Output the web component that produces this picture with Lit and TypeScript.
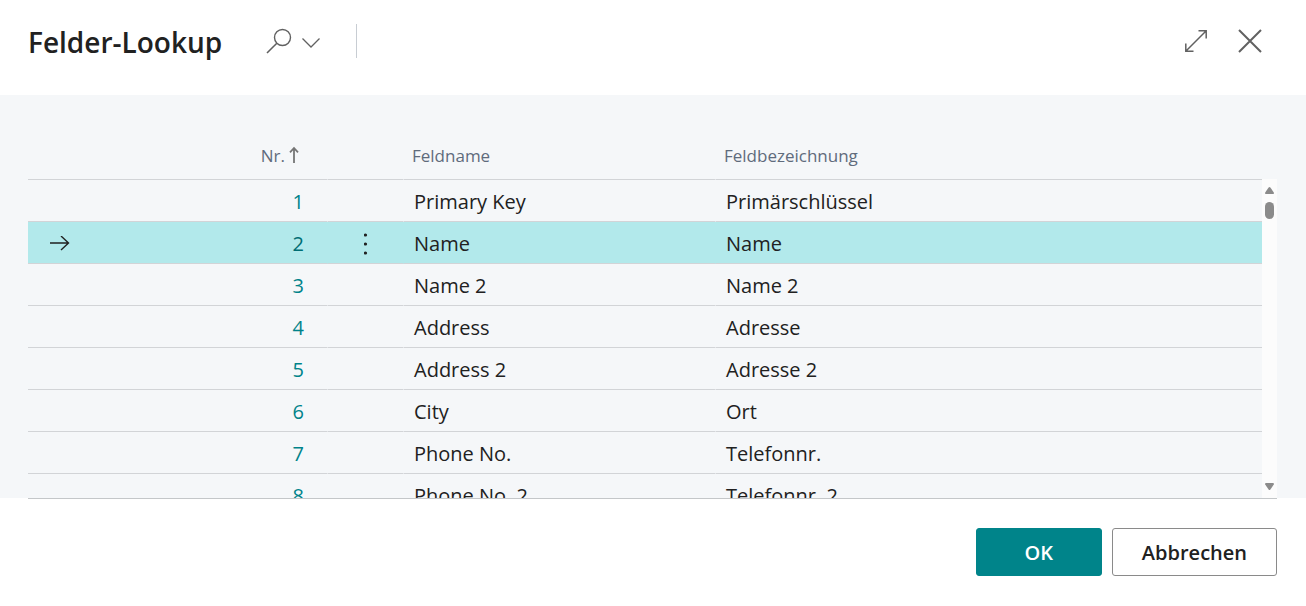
import { LitElement, html, css, svg } from "lit";
import { customElement, state } from "lit/decorators.js";
import { classMap } from "lit/directives/class-map.js";

interface Field {
  no: number;
  name: string;
  caption: string;
}

const FIELDS: Field[] = [
  { no: 1, name: "Primary Key", caption: "Primärschlüssel" },
  { no: 2, name: "Name", caption: "Name" },
  { no: 3, name: "Name 2", caption: "Name 2" },
  { no: 4, name: "Address", caption: "Adresse" },
  { no: 5, name: "Address 2", caption: "Adresse 2" },
  { no: 6, name: "City", caption: "Ort" },
  { no: 7, name: "Phone No.", caption: "Telefonnr." },
  { no: 8, name: "Phone No. 2", caption: "Telefonnr. 2" },
];

const line = (w: number, h: number, d: unknown) => html`
  <svg class="icon" width=${w} height=${h} viewBox="0 0 ${w} ${h}" aria-hidden="true">${d}</svg>
`;

const searchIcon = line(26, 26, svg`
  <circle cx="16.5" cy="9.5" r="8" stroke-width="1.4" />
  <path d="M10.8 15.2 1 25" stroke-width="1.6" />`);
const chevronIcon = line(20, 16, svg`<path d="M1.5 5.500 10 14 18.5 5.500" stroke-width="1.3" />`);
const expandIcon = line(24, 24, svg`
  <path d="M2 22 22 2M14.5 1.8h7.7v7.7M1.8 14.5v7.7h7.7" stroke-width="1.5" />`);
const closeIcon = line(26, 26, svg`<path d="M2 2 24 24M24 2 2 24" stroke-width="2" />`);
const sortIcon = line(10, 20, svg`<path d="M5 17V2M1 6.4 5 2l4 4.4" stroke-width="1.8" />`);
const currentIcon = line(20, 16, svg`<path d="M0 7H18.500M11 0 18.500 7l-7.500 7" stroke-width="1.4" />`);
const moreIcon = html`
  <svg class="dots" width="4" height="24" viewBox="0 0 4 24" aria-hidden="true">
    <circle cx="1.500" cy="2" r="1.600" /><circle cx="1.500" cy="11" r="1.600" /><circle cx="1.500" cy="20" r="1.600" />
  </svg>`;

@customElement("app-root")
export class AppRoot extends LitElement {
  @state() private selected = 2;

  static styles = css`
    :host {
      display: flex;
      flex-direction: column;
      height: 100vh;
      background: #fff;
      color: #212121;
      font: 20px/28px "Segoe UI", "Open Sans", "Noto Sans", sans-serif;
    }
    * {
      box-sizing: border-box;
    }
    button {
      font: inherit;
      color: inherit;
      background: none;
      border: 0;
      padding: 0;
      cursor: pointer;
    }
    .icon {
      display: block;
      fill: none;
      stroke: currentColor;
    }
    .header {
      display: flex;
      align-items: center;
      padding: 24px 43px 37px 28px;
      color: #616161;
    }
    .title {
      margin: 0 44px 0 0;
      padding-top: 2px;
      font-size: 28px;
      line-height: 32px;
      font-weight: 600;
      color: #212121;
    }
    .search {
      display: flex;
      align-items: center;
      gap: 9px;
      padding-right: 35px;
      border-right: 1px solid #c8cdd3;
      height: 34px;
    }
    .window {
      display: flex;
      align-items: center;
      gap: 29px;
      margin-left: auto;
    }
    .body {
      flex: 1;
      min-height: 0;
      display: flex;
      background: linear-gradient(#f5f7f9, #f5f7f9) 0 0 / 100% calc(100% - 1px) no-repeat;
      padding: 36px 29px 0 28px;
    }
    .list {
      flex: 1;
      display: flex;
      border-bottom: 1px solid #c4c7c9;
    }
    .viewport {
      flex: 1;
      overflow: hidden;
    }
    .fields {
      width: 100%;
      table-layout: fixed;
      border-collapse: separate;
      border-spacing: 0;
    }
    .c-mark {
      width: 64px;
    }
    .c-no {
      width: 235px;
    }
    .c-menu {
      width: 76px;
    }
    .c-name {
      width: 312px;
    }
    th,
    td {
      padding: 2px 0 0 10px;
      text-align: left;
      border-bottom: 1px solid #d2d4d7;
      border-left: 1px solid transparent;
    }
    th {
      position: sticky;
      top: 0;
      height: 49px;
      padding-left: 8px;
      font-size: 17px;
      font-weight: 400;
      color: #5f6b7c;
      background: #f5f7f9;
    }
    td {
      height: 42px;
    }
    .mark,
    .no {
      border-left: 0;
    }
    .mark {
      padding-left: 22px;
    }
    .no {
      padding: 2px 23px 0 0;
      text-align: right;
      color: #00838a;
    }
    th.no {
      padding-right: 28px;
      color: #5f6b7c;
    }
    .sort {
      display: inline-flex;
      align-items: center;
      gap: 4px;
    }
    .sort .icon {
      color: #757575;
    }
    .menu {
      padding: 2px 0 0;
      text-align: center;
    }
    .menu button {
      display: inline-flex;
      justify-content: center;
      width: 32px;
      vertical-align: middle;
    }
    .dots {
      fill: #212121;
    }
    .selected td {
      background: #b2e9eb;
    }
    .selected .no {
      color: #006d73;
    }
    .scroll {
      width: 15px;
      margin-top: 48px;
      padding: 8px 3px;
      display: flex;
      flex-direction: column;
      align-items: center;
      gap: 8px;
      background: #fcfcfc;
    }
    .scroll svg {
      fill: #8b8b8b;
    }
    .thumb {
      width: 9px;
      height: 17px;
      border-radius: 5px;
      background: #8b8b8b;
    }
    .down {
      margin-top: auto;
    }
    .footer {
      display: flex;
      justify-content: flex-end;
      gap: 10px;
      padding: 29px 29px 30px;
    }
    .footer button {
      height: 48px;
      padding: 2px 29px 0;
      min-width: 126px;
      border: 1px solid #8a8a8a;
      border-radius: 3px;
      font-weight: 600;
      color: #212121;
    }
    .footer .primary {
      background: #00848a;
      border-color: #00848a;
      color: #fff;
    }
  `;

  render() {
    return html`
      <header class="header">
        <h1 class="title">Felder-Lookup</h1>
        <div class="search">
          <button aria-label="Suchen">${searchIcon}</button>
          <button aria-label="Suchoptionen">${chevronIcon}</button>
        </div>
        <div class="window">
          <button aria-label="Maximieren">${expandIcon}</button>
          <button aria-label="Schließen">${closeIcon}</button>
        </div>
      </header>
      <main class="body">
        <div class="list">
          <div class="viewport">
            <table class="fields">
              <colgroup>
                <col class="c-mark" /><col class="c-no" /><col class="c-menu" /><col class="c-name" /><col />
              </colgroup>
              <thead>
                <tr>
                  <th class="mark"></th>
                  <th class="no" scope="col" aria-sort="ascending"><span class="sort">Nr.${sortIcon}</span></th>
                  <th></th>
                  <th scope="col">Feldname</th>
                  <th scope="col">Feldbezeichnung</th>
                </tr>
              </thead>
              <tbody>
                ${FIELDS.map((f) => this.row(f))}
              </tbody>
            </table>
          </div>
          <div class="scroll" aria-hidden="true">
            <svg width="9" height="7" viewBox="0 0 9 7"><path d="M3.600.6Q4.500-.4 5.400.6L8.800 5.500Q9.200 7 8 7H1Q-.2 7 .2 5.500Z" /></svg>
            <div class="thumb"></div>
            <svg class="down" width="9" height="7" viewBox="0 0 9 7"><path d="M3.600 6.400Q4.500 7.400 5.400 6.400L8.800 1.500Q9.200 0 8 0H1Q-.2 0 .2 1.500Z" /></svg>
          </div>
        </div>
      </main>
      <footer class="footer">
        <button class="primary">OK</button>
        <button>Abbrechen</button>
      </footer>
    `;
  }

  private row(f: Field) {
    const current = f.no === this.selected;
    return html`
      <tr class=${classMap({ selected: current })} @click=${() => (this.selected = f.no)}>
        <td class="mark">${current ? currentIcon : null}</td>
        <td class="no">${f.no}</td>
        <td class="menu">
          ${current ? html`<button aria-label="Weitere Optionen">${moreIcon}</button>` : null}
        </td>
        <td>${f.name}</td>
        <td>${f.caption}</td>
      </tr>
    `;
  }
}
